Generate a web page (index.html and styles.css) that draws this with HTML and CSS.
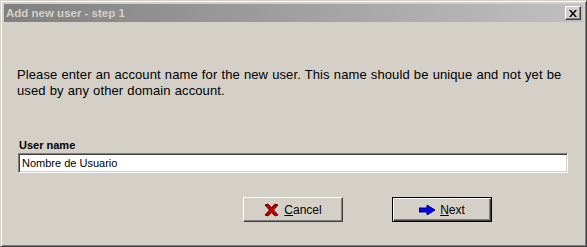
FILE: index.html
```html
<!DOCTYPE html>
<html lang="en">
<head>
  <meta charset="UTF-8" />
  <title>Add new user - step 1</title>
  <link rel="stylesheet" href="styles.css">
</head>
<body>
  <div class="window">
    <div class="titlebar">
      <span class="title">Add new user - step 1</span>
      <button class="close" aria-label="Close">
        <svg width="8" height="7" viewBox="0 0 8 7">
          <path d="M0 0h2l2 2.5L6 0h2L5 3.5 8 7H6L4 4.5 2 7H0l3-3.5z" fill="#000"/>
        </svg>
      </button>
    </div>

    <div class="content">
      <p class="intro">Please enter an account name for the new user. This name should be unique and not yet be used by any other domain account.</p>

      <label class="field-label" for="username">User name</label>
      <input id="username" class="field" type="text" value="Nombre de Usuario" />

      <div class="actions">
        <button class="btn">
          <svg width="15" height="14" viewBox="0 0 15 14">
            <path d="M1 2l3-1 3.5 3.5L11 1l3 1-4.5 5 4.5 5-3 1-3.5-3.5L4 13l-3-1 4.5-5z" fill="#c00000" stroke="#600000" stroke-width="1"/>
          </svg>
          <span><u>C</u>ancel</span>
        </button>
        <button class="btn default">
          <svg width="16" height="10" viewBox="0 0 16 10">
            <path d="M0 3h8V0l8 5-8 5V7H0z" fill="#0000ff" stroke="#000080" stroke-width="1"/>
          </svg>
          <span><u>N</u>ext</span>
        </button>
      </div>
    </div>
  </div>
</body>
</html>
```

FILE: styles.css
```css
html, body {
  margin: 0;
  padding: 0;
  background: #d4d0c8;
}
.window {
  width: 587px;
  height: 247px;
  box-sizing: border-box;
  padding: 2px;
  border: 1px solid;
  border-color: #d4d0c8 #404040 #404040 #d4d0c8;
  box-shadow: inset 1px 1px #fff, inset -1px -1px #808080;
  background: #d4d0c8;
  display: flex;
  flex-direction: column;
}
.titlebar {
  height: 18px;
  margin: 1px 1px 0 1px;
  background: linear-gradient(to right, #808080, #c0c0c0);
  display: flex;
  align-items: center;
  justify-content: space-between;
  padding: 0 2px 0 2px;
}
.title {
  font-family: "Liberation Sans", Tahoma, sans-serif;
  font-weight: bold;
  font-size: 11.5px;
  color: #d4d0c8;
}
.close {
  width: 16px;
  height: 14px;
  padding: 0;
  background: #d4d0c8;
  border: 1px solid;
  border-color: #fff #404040 #404040 #fff;
  box-shadow: inset -1px -1px #808080;
  display: flex;
  align-items: center;
  justify-content: center;
}
.content {
  padding: 0 16px 0 14px;
  font-family: "Liberation Sans", Arial, sans-serif;
  color: #000;
}
.intro {
  margin: 45px 0 0 0;
  font-size: 13px;
  line-height: 16px;
  letter-spacing: 0.1px;
  word-spacing: 0.4px;
}
.field-label {
  display: block;
  margin-top: 40px;
  padding-left: 2px;
  font-size: 11px;
  font-weight: bold;
}
.field {
  display: block;
  box-sizing: border-box;
  width: 550px;
  height: 20px;
  margin: 2px 0 0 1px;
  padding: 1px 3px;
  font-family: "Liberation Sans", Arial, sans-serif;
  font-size: 11px;
  background: #fff;
  border: 1px solid;
  border-color: #808080 #fff #fff #808080;
  box-shadow: inset 1px 1px #404040, inset -1px -1px #d4d0c8;
  outline: none;
}
.actions {
  display: flex;
  gap: 49px;
  margin: 24px 0 0 226px;
}
.btn {
  width: 100px;
  height: 25px;
  box-sizing: border-box;
  background: #d4d0c8;
  border: 1px solid;
  border-color: #fff #404040 #404040 #fff;
  box-shadow: inset -1px -1px #808080;
  display: flex;
  align-items: center;
  justify-content: center;
  gap: 5px;
  padding: 0;
  font-family: "Liberation Sans", Arial, sans-serif;
  font-size: 12px;
  color: #000;
}
.btn.default {
  border: 1px solid #000;
  box-shadow: inset 1px 1px #fff, inset -1px -1px #404040, inset -2px -2px #808080;
}
```
